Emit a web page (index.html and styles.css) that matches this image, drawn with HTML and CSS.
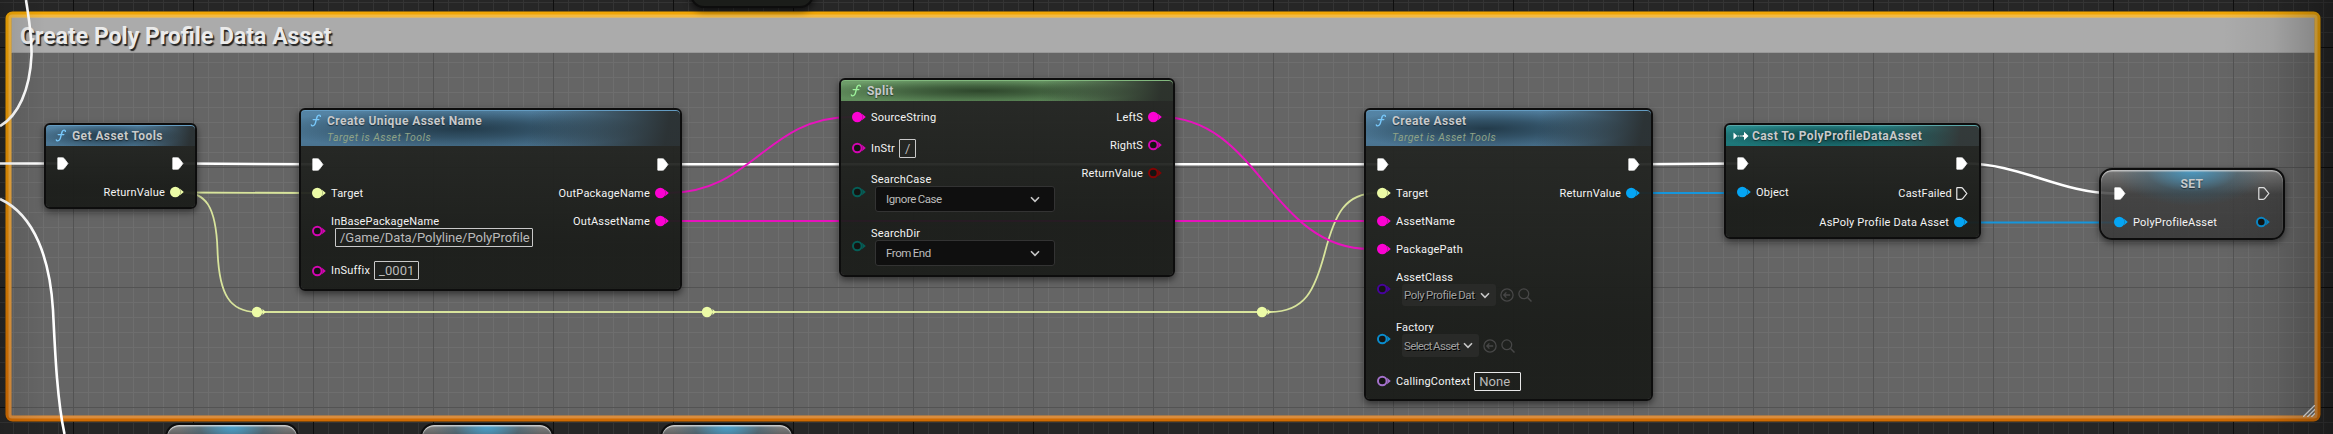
FILE: index.html
```html
<!DOCTYPE html>
<html lang="en">
<head>
<meta charset="utf-8">
<title>Blueprint graph</title>
<link rel="stylesheet" href="styles.css">
</head>
<body>
<svg class="defs" width="0" height="0">
  <symbol id="pin" viewBox="0 0 14 12"><circle cx="5.3" cy="6" r="5.3" fill="currentColor"/><path d="M10 2.7 13.8 6 10 9.3Q11.2 6 10 2.7Z" fill="currentColor"/></symbol>
  <symbol id="ring" viewBox="0 0 14 12"><circle cx="5.3" cy="6" r="4.3" fill="#131412" stroke="currentColor" stroke-width="2"/><path d="M10 2.7 13.8 6 10 9.3Q11.2 6 10 2.7Z" fill="currentColor"/></symbol>
  <symbol id="exec" viewBox="0 0 12 13"><path d="M.8 .8H5.6Q6.6 .8 7.3 1.7L10.9 6.5 7.3 11.3Q6.6 12.2 5.6 12.2H.8Z" fill="#fff" stroke="#fff" stroke-width=".8" stroke-linejoin="round"/></symbol>
  <symbol id="exec-open" viewBox="0 0 12 13"><path d="M.8 1Q.8 .7 1.2 .7H5.2Q6.2 .7 6.9 1.6L10.8 6.5 6.9 11.4Q6.2 12.3 5.2 12.3H1.2Q.8 12.3 .8 12Z" fill="none" stroke="#e8e8e8" stroke-width="1.2"/></symbol>
  <symbol id="fn" viewBox="0 0 12 13"><path d="M10.4 2.4C10.4 .8 8.2 .6 7.3 2.4 6.3 4.6 5.9 8.2 4.9 10.3 4 12.2 1.6 12.3 1.3 10.9M3.2 5.6H8.8" fill="none" stroke="currentColor" stroke-width="1.4" stroke-linecap="round"/></symbol>
  <symbol id="chev" viewBox="0 0 10 7"><path d="M1 1.3 5 5.3 9 1.3" fill="none" stroke="#c8c8c8" stroke-width="1.6"/></symbol>
  <symbol id="use" viewBox="0 0 14 14"><circle cx="7" cy="7" r="6.1" fill="none" stroke="#474747" stroke-width="1.3"/><path d="M10.2 7H4M6.4 4.4 3.8 7 6.4 9.6" fill="none" stroke="#474747" stroke-width="1.3"/></symbol>
  <symbol id="find" viewBox="0 0 14 14"><circle cx="5.8" cy="5.8" r="4.9" fill="none" stroke="#474747" stroke-width="1.3"/><path d="M9.3 9.3 13.5 13.5" stroke="#474747" stroke-width="1.5"/></symbol>
</svg>

<main class="graph">
  <section class="comment">
    <h1 class="comment-title">Create Poly Profile Data Asset</h1>
    <div class="comment-body"></div>
    <svg class="comment-frame" width="2316" height="411" viewBox="0 0 2316 411">
      <defs><linearGradient id="gold" x1="0" y1="0" x2="0" y2="1"><stop offset="0" stop-color="#f0a506"/><stop offset="1" stop-color="#cf6a02"/></linearGradient></defs>
      <rect x=".5" y=".5" width="2315" height="410" rx="6" fill="none" stroke="#2d2614" stroke-opacity=".7"/>
      <rect x="3.5" y="3.5" width="2309" height="404" rx="4" fill="none" stroke="url(#gold)" stroke-width="6"/>
      <rect x="5" y="5" width="2306" height="401" rx="2" fill="none" stroke="#fff" stroke-opacity=".24" stroke-width="3"/>
    </svg>
    <svg class="comment-grip" width="12" height="12" viewBox="0 0 12 12"><path d="M0 12 12 0M4.3 12 12 4.3M8.3 12 12 8.3" stroke="#e6e6e6" stroke-width="1.3"/></svg>
  </section>

  <svg class="wires" width="2333" height="434" viewBox="0 0 2333 434">
    <g class="w-exec">
      <path d="M26 0C29 20 32 35 31.5 55C30 90 18 116 0 126"/>
      <path d="M0 199C35 215 50 260 53 310C55 350 57 400 64.5 434"/>
      <path d="M0 163.5H58M183 163.5 313 164.3M668 164.3H1378M1639 164.3 1738 163.5"/>
      <path d="M1966 163.5C2020 163.5 2061 193.5 2115 193.5"/>
    </g>
    <g class="w-obj">
      <path d="M183 192.5 313 193"/>
      <path d="M183 192.5C205 192.5 216 205 217.5 250C219 295 230 312 257 312H1270C1305 312 1315 290 1325 252C1335 214 1345 193 1377 193"/>
    </g>
    <g class="w-str">
      <path d="M668 193C753 193 766 117 851 117"/>
      <path d="M1160 117C1260 117 1270 249 1370 249"/>
      <path d="M668 221H1378"/>
    </g>
    <path class="w-blue" d="M1639 193H1738M1966 222.5H2115"/>
    <g class="knots">
      <circle cx="257" cy="312" r="5.2"/><path d="M262.5 309 266 312 262.5 315Z"/>
      <circle cx="707" cy="312" r="5.2"/><path d="M712.5 309 716 312 712.5 315Z"/>
      <circle cx="1262" cy="312" r="5.2"/><path d="M1267.5 309 1271 312 1267.5 315Z"/>
    </g>
  </svg>

  <div class="node stub top"></div>
  <div class="node stub low-a"></div>
  <div class="node stub low-b"></div>
  <div class="node stub low-c"></div>

  <article class="node n-tools">
    <header class="head blue"><svg class="fn"><use href="#fn"/></svg><h2>Get Asset Tools</h2></header>
    <div class="body short">
      <div class="col"><div class="row e"><svg class="exec"><use href="#exec"/></svg></div></div>
      <div class="col out">
        <div class="row e"><svg class="exec"><use href="#exec"/></svg></div>
        <div class="row"><span>ReturnValue</span><svg class="pin lime"><use href="#pin"/></svg></div>
      </div>
    </div>
  </article>

  <article class="node n-unique">
    <header class="head blue tall"><svg class="fn"><use href="#fn"/></svg><h2>Create Unique Asset Name</h2><p>Target is Asset Tools</p></header>
    <div class="body">
      <div class="col">
        <div class="row e"><svg class="exec"><use href="#exec"/></svg></div>
        <div class="row"><svg class="pin lime"><use href="#pin"/></svg><span>Target</span></div>
        <div class="row base"><svg class="pin magenta"><use href="#ring"/></svg><div class="stack"><span>InBasePackageName</span><div class="field path">/Game/Data/Polyline/PolyProfile</div></div></div>
        <div class="row suffix"><svg class="pin magenta"><use href="#ring"/></svg><span>InSuffix</span><div class="field">_0001</div></div>
      </div>
      <div class="col out">
        <div class="row e"><svg class="exec"><use href="#exec"/></svg></div>
        <div class="row"><span>OutPackageName</span><svg class="pin magenta"><use href="#pin"/></svg></div>
        <div class="row"><span>OutAssetName</span><svg class="pin magenta"><use href="#pin"/></svg></div>
      </div>
    </div>
  </article>

  <article class="node n-split">
    <header class="head green"><svg class="fn"><use href="#fn"/></svg><h2>Split</h2></header>
    <div class="body pure">
      <div class="col">
        <div class="row"><svg class="pin magenta"><use href="#pin"/></svg><span>SourceString</span></div>
        <div class="row instr"><svg class="pin magenta"><use href="#ring"/></svg><span>InStr</span><div class="field">/</div></div>
        <div class="row enum"><svg class="pin teal"><use href="#ring"/></svg><div class="stack"><span>SearchCase</span><div class="select">Ignore Case<svg class="chev"><use href="#chev"/></svg></div></div></div>
        <div class="row enum"><svg class="pin teal"><use href="#ring"/></svg><div class="stack"><span>SearchDir</span><div class="select">From End<svg class="chev"><use href="#chev"/></svg></div></div></div>
      </div>
      <div class="col out">
        <div class="row"><span>LeftS</span><svg class="pin magenta"><use href="#pin"/></svg></div>
        <div class="row"><span>RightS</span><svg class="pin magenta"><use href="#ring"/></svg></div>
        <div class="row"><span>ReturnValue</span><svg class="pin red"><use href="#ring"/></svg></div>
      </div>
    </div>
  </article>

  <article class="node n-asset">
    <header class="head blue tall"><svg class="fn"><use href="#fn"/></svg><h2>Create Asset</h2><p>Target is Asset Tools</p></header>
    <div class="body">
      <div class="col">
        <div class="row e"><svg class="exec"><use href="#exec"/></svg></div>
        <div class="row"><svg class="pin lime"><use href="#pin"/></svg><span>Target</span></div>
        <div class="row"><svg class="pin magenta"><use href="#pin"/></svg><span>AssetName</span></div>
        <div class="row"><svg class="pin magenta"><use href="#pin"/></svg><span>PackagePath</span></div>
        <div class="row class"><svg class="pin violet"><use href="#ring"/></svg><div class="stack"><span>AssetClass</span><div class="picker"><div class="combo">Poly Profile Dat<svg class="chev"><use href="#chev"/></svg></div><svg class="tool"><use href="#use"/></svg><svg class="tool"><use href="#find"/></svg></div></div></div>
        <div class="row factory"><svg class="pin sky"><use href="#ring"/></svg><div class="stack"><span>Factory</span><div class="picker"><div class="combo">Select Asset<svg class="chev"><use href="#chev"/></svg></div><svg class="tool"><use href="#use"/></svg><svg class="tool"><use href="#find"/></svg></div></div></div>
        <div class="row context"><svg class="pin lilac"><use href="#ring"/></svg><span>CallingContext</span><div class="field name">None</div></div>
      </div>
      <div class="col out">
        <div class="row e"><svg class="exec"><use href="#exec"/></svg></div>
        <div class="row"><span>ReturnValue</span><svg class="pin sky"><use href="#pin"/></svg></div>
      </div>
    </div>
  </article>

  <article class="node n-cast">
    <header class="head teal-head"><svg class="cast" viewBox="0 0 16 10"><path d="M.5 1.6 4.3 5 .5 8.4ZM11 .8 15.5 5 11 9.2Z" fill="#fff"/><path d="M9.5 5H12" stroke="#fff" stroke-width="1.8"/><path d="M4.6 5H9.4" stroke="#a9bcbc" stroke-width="1.5" stroke-dasharray="1.7 .8"/></svg><h2>Cast To PolyProfileDataAsset</h2></header>
    <div class="body short">
      <div class="col">
        <div class="row e"><svg class="exec"><use href="#exec"/></svg></div>
        <div class="row"><svg class="pin sky"><use href="#pin"/></svg><span>Object</span></div>
      </div>
      <div class="col out">
        <div class="row e"><svg class="exec"><use href="#exec"/></svg></div>
        <div class="row failed"><span>CastFailed</span><svg class="exec"><use href="#exec-open"/></svg></div>
        <div class="row"><span>AsPoly Profile Data Asset</span><svg class="pin sky"><use href="#pin"/></svg></div>
      </div>
    </div>
  </article>

  <article class="node n-set">
    <h2 class="set-title">SET</h2>
    <div class="body">
      <div class="col">
        <div class="row e"><svg class="exec"><use href="#exec"/></svg></div>
        <div class="row"><svg class="pin sky"><use href="#pin"/></svg><span>PolyProfileAsset</span></div>
      </div>
      <div class="col out">
        <div class="row e"><svg class="exec"><use href="#exec-open"/></svg></div>
        <div class="row"><svg class="pin sky"><use href="#ring"/></svg></div>
      </div>
    </div>
  </article>

  <div class="vignette"></div>
</main>
</body>
</html>
```
FILE: styles.css
```css
* { box-sizing: border-box; }
body { margin: 0; background: #262626; }
h1, h2, p { margin: 0; }
svg { display: block; flex: none; }
.defs { position: absolute; }

.graph {
  position: relative;
  width: 2333px;
  height: 434px;
  overflow: hidden;
  font: 11px/14px Roboto, sans-serif;
  letter-spacing: .2px;
  color: #f4f4f4;
  background-color: #262626;
  background-image:
    linear-gradient(to right, #0e0e0e 1px, transparent 1px),
    linear-gradient(to bottom, #0e0e0e 1px, transparent 1px),
    linear-gradient(to right, #343434 1px, transparent 1px),
    linear-gradient(to bottom, #343434 1px, transparent 1px);
  background-size: 120px 120px, 120px 120px, 15px 15px, 15px 15px;
  background-position: 73px 0, 0 47px, 13px 0, 0 2px;
}

/* comment box */
.comment {
  position: absolute;
  left: 5px;
  top: 11px;
  width: 2316px;
  height: 411px;
  padding: 6px;
  display: flex;
  flex-direction: column;
}
.comment-title {
  height: 36px;
  padding-left: 8px;
  background: #ababab;
  border: 1px solid #999;
  border-top-color: #b8b8b8;
  color: #ebebeb;
  font-size: 23px;
  line-height: 37px;
  font-weight: 700;
  letter-spacing: 0;
  text-shadow: 1.5px 1.5px 1px #222;
}
.comment-body { flex: 1; background: rgba(255, 255, 255, .29); }
.comment-frame { position: absolute; left: 0; top: 0; }
.comment-grip { position: absolute; right: 6px; bottom: 5px; }

/* wires */
.wires { position: absolute; left: 0; top: 0; fill: none; }
.w-exec { stroke: #fff; stroke-width: 2.6; }
.w-obj { stroke: #d8e49c; stroke-width: 1.8; }
.w-str { stroke: #e713bd; stroke-width: 1.9; }
.w-blue { stroke: #1596dc; stroke-width: 1.8; }
.knots { fill: #ecfba6; }

/* nodes */
.node {
  position: absolute;
  border: 2px solid #0d0d0d;
  border-radius: 6px;
  background: linear-gradient(rgba(37, 39, 36, .94), rgba(26, 28, 25, .94) 75%);
  background-clip: padding-box;
  box-shadow: 0 3px 7px rgba(0, 0, 0, .5);
}
.n-tools { left: 44px; top: 123px; width: 153px; height: 86px; }
.n-unique { left: 299px; top: 108px; width: 383px; height: 183px; }
.n-split { left: 839px; top: 78px; width: 336px; height: 199px; }
.n-asset { left: 1364px; top: 108px; width: 289px; height: 293px; }
.n-cast { left: 1724px; top: 123px; width: 257px; height: 116px; }

.head {
  position: relative;
  height: 21px;
  display: grid;
  grid-template-columns: 26px 1fr;
  grid-template-rows: 21px 1fr;
  align-items: center;
  border-radius: 4px 4px 0 0;
}
.head.tall { height: 36px; }
.head.tall p { padding-bottom: 3px; }
.head h2, .set-title {
  color: #c8cacb;
  font-size: 12px;
  line-height: 16px;
  font-weight: 700;
  letter-spacing: .42px;
  text-shadow: 0 1px 1px rgba(0, 0, 0, .5);
}
.head h2 { padding-top: 1px; }
.head p {
  grid-column: 2;
  color: #8fa386;
  font-size: 10.5px;
  font-style: italic;
  letter-spacing: .44px;
}
.blue {
  color: #78c8fa;
  background:
    linear-gradient(100deg, transparent 60%, rgba(42, 47, 48, .95) 96%),
    radial-gradient(ellipse 50% 58% at 42% 52%, rgba(30, 52, 66, .9), rgba(30, 52, 66, .6) 40%, transparent),
    linear-gradient(#5585a6, #4a7491);
  box-shadow: inset 0 1px 0 #649cc2;
}
.green {
  color: #9df29b;
  background:
    linear-gradient(100deg, transparent 60%, rgba(42, 46, 42, .95) 96%),
    radial-gradient(ellipse 50% 58% at 42% 52%, rgba(40, 62, 38, .9), rgba(40, 62, 38, .6) 40%, transparent),
    linear-gradient(#6f9f6b, #5f8c5b);
  box-shadow: inset 0 1px 0 #82b87e;
}
.teal-head {
  background:
    linear-gradient(100deg, transparent 60%, rgba(52, 54, 54, .95) 92%),
    radial-gradient(ellipse 50% 58% at 42% 52%, rgba(14, 58, 60, .9), rgba(14, 58, 60, .6) 40%, transparent),
    linear-gradient(#2a8c8e, #1c7678);
  box-shadow: inset 0 1px 0 #5aa6a8;
}
.fn { width: 12px; height: 13px; margin-left: 9px; }
.cast { width: 16px; height: 10px; margin-left: 7px; }

.body { display: flex; justify-content: space-between; padding: 4px 11px 0 11px; }
.body.short { padding-top: 3px; }
.body.pure { padding-top: 2px; }
.col { display: flex; flex-direction: column; }
.out { align-items: flex-end; margin-left: -100px; }
.row { height: 28px; display: flex; align-items: center; gap: 5px; white-space: nowrap; }
.row > span { padding-top: 1px; }
.row.e { height: 29px; }
.row.failed { height: 30px; gap: 4px; }
.row.base { height: 47px; }
.row.suffix { height: 33px; }
.row.instr, .row.context { height: 34px; }
.row.suffix, .row.instr, .row.context { gap: 4px; }
.row.suffix .pin, .row.instr .pin, .row.context .pin { margin-right: 1px; }
.row.enum { height: 54px; }
.row.class { height: 51px; }
.row.factory { height: 50px; }
.row.base, .row.enum, .row.class, .row.factory { align-items: stretch; }
.row.base > .pin, .row.enum > .pin, .row.class > .pin, .row.factory > .pin { align-self: center; }
.stack { display: flex; flex-direction: column; align-items: flex-start; padding-top: 8px; }
.stack > span { height: 13px; }
.factory .stack { padding-top: 7px; }

.pin { width: 14px; height: 12px; }
.exec { width: 12px; height: 13px; }
.lime { color: #ecfba6; }
.magenta { color: #fb02d2; }
.magenta:has([href="#ring"]) { color: #d305b2; }
.teal { color: #055e57; }
.red { color: #820404; }
.sky { color: #05a5f4; }
.sky:has([href="#ring"]) { color: #0a8ccd; }
.violet { color: #47039c; }
.lilac { color: #a471cc; }

.field {
  height: 19px;
  padding: 0 4px;
  border: 1px solid #c9c9c9;
  border-radius: 1px;
  color: #bababa;
  font-size: 13px;
  line-height: 18px;
  letter-spacing: .05px;
}
.path { width: 198px; margin-left: 4px; letter-spacing: -.02px; }
.instr .field { width: 17px; padding: 0 5px; }
.name { width: 47px; border-color: #e8e8e8; }
.select {
  width: 180px;
  height: 26px;
  margin-left: 4px;
  padding: 0 14px 0 10px;
  display: flex;
  align-items: center;
  justify-content: space-between;
  border: 1px solid #333;
  border-radius: 3px;
  background: #0f0f0f;
}
.select, .combo { color: #bdbdbd; font-size: 11.5px; word-spacing: -.8px; letter-spacing: -.4px; }
.chev { width: 10px; height: 7px; }
.picker { display: flex; align-items: center; gap: 4px; margin-left: 6px; }
.combo {
  width: 94px;
  height: 22px;
  padding: 0 6px 0 2px;
  margin-right: 1px;
  display: flex;
  align-items: center;
  justify-content: space-between;
  border-radius: 3px;
  background: #292a28;
  color: #a0a0a0;
  text-shadow: 1px 1px 0 #000;
}
.factory .combo { width: 77px; height: 23px; letter-spacing: -.65px; }
.tool { width: 14px; height: 14px; }
.combo + .tool { margin-left: -1px; }

/* variable nodes */
.n-set {
  left: 2099px;
  top: 168px;
  width: 186px;
  height: 72px;
  border-radius: 13px;
  background:
    radial-gradient(ellipse 42% 36px at 50% 0, rgba(66, 160, 208, .85), rgba(45, 95, 120, .35) 60%, transparent),
    linear-gradient(rgba(125, 125, 125, .85), rgba(62, 62, 62, .85) 24px, rgba(56, 56, 56, .85));
  background-clip: padding-box;
  box-shadow: inset 0 1.5px 1px rgba(225, 225, 225, .7), 0 3px 7px rgba(0, 0, 0, .5);
}
.n-set .body { padding: 9px 13px 0; }
.set-title { position: absolute; left: 0; right: 0; top: 6px; text-align: center; }
.stub {
  top: 423px;
  width: 134px;
  height: 60px;
  border-radius: 14px;
  background:
    radial-gradient(ellipse 42% 34px at 50% 0, rgba(70, 165, 212, .95), rgba(45, 95, 120, .4) 60%, transparent),
    linear-gradient(#858585, #333 22px);
  box-shadow: inset 0 1.5px 1px rgba(225, 225, 225, .8);
}
.stub.top {
  left: 690px;
  top: -52px;
  width: 124px;
  background: #1b1d1a;
  box-shadow: 0 3px 7px rgba(0, 0, 0, .6);
}
.low-a { left: 165px; }
.low-b { left: 420px; }
.low-c { left: 660px; }

.vignette {
  position: absolute;
  inset: 0;
  pointer-events: none;
  background:
    linear-gradient(to left, rgba(0, 0, 0, .28), rgba(0, 0, 0, .2) 20px, rgba(0, 0, 0, .06) 60px, transparent 110px),
    linear-gradient(to right, rgba(0, 0, 0, .1), transparent 45px);
}
```
